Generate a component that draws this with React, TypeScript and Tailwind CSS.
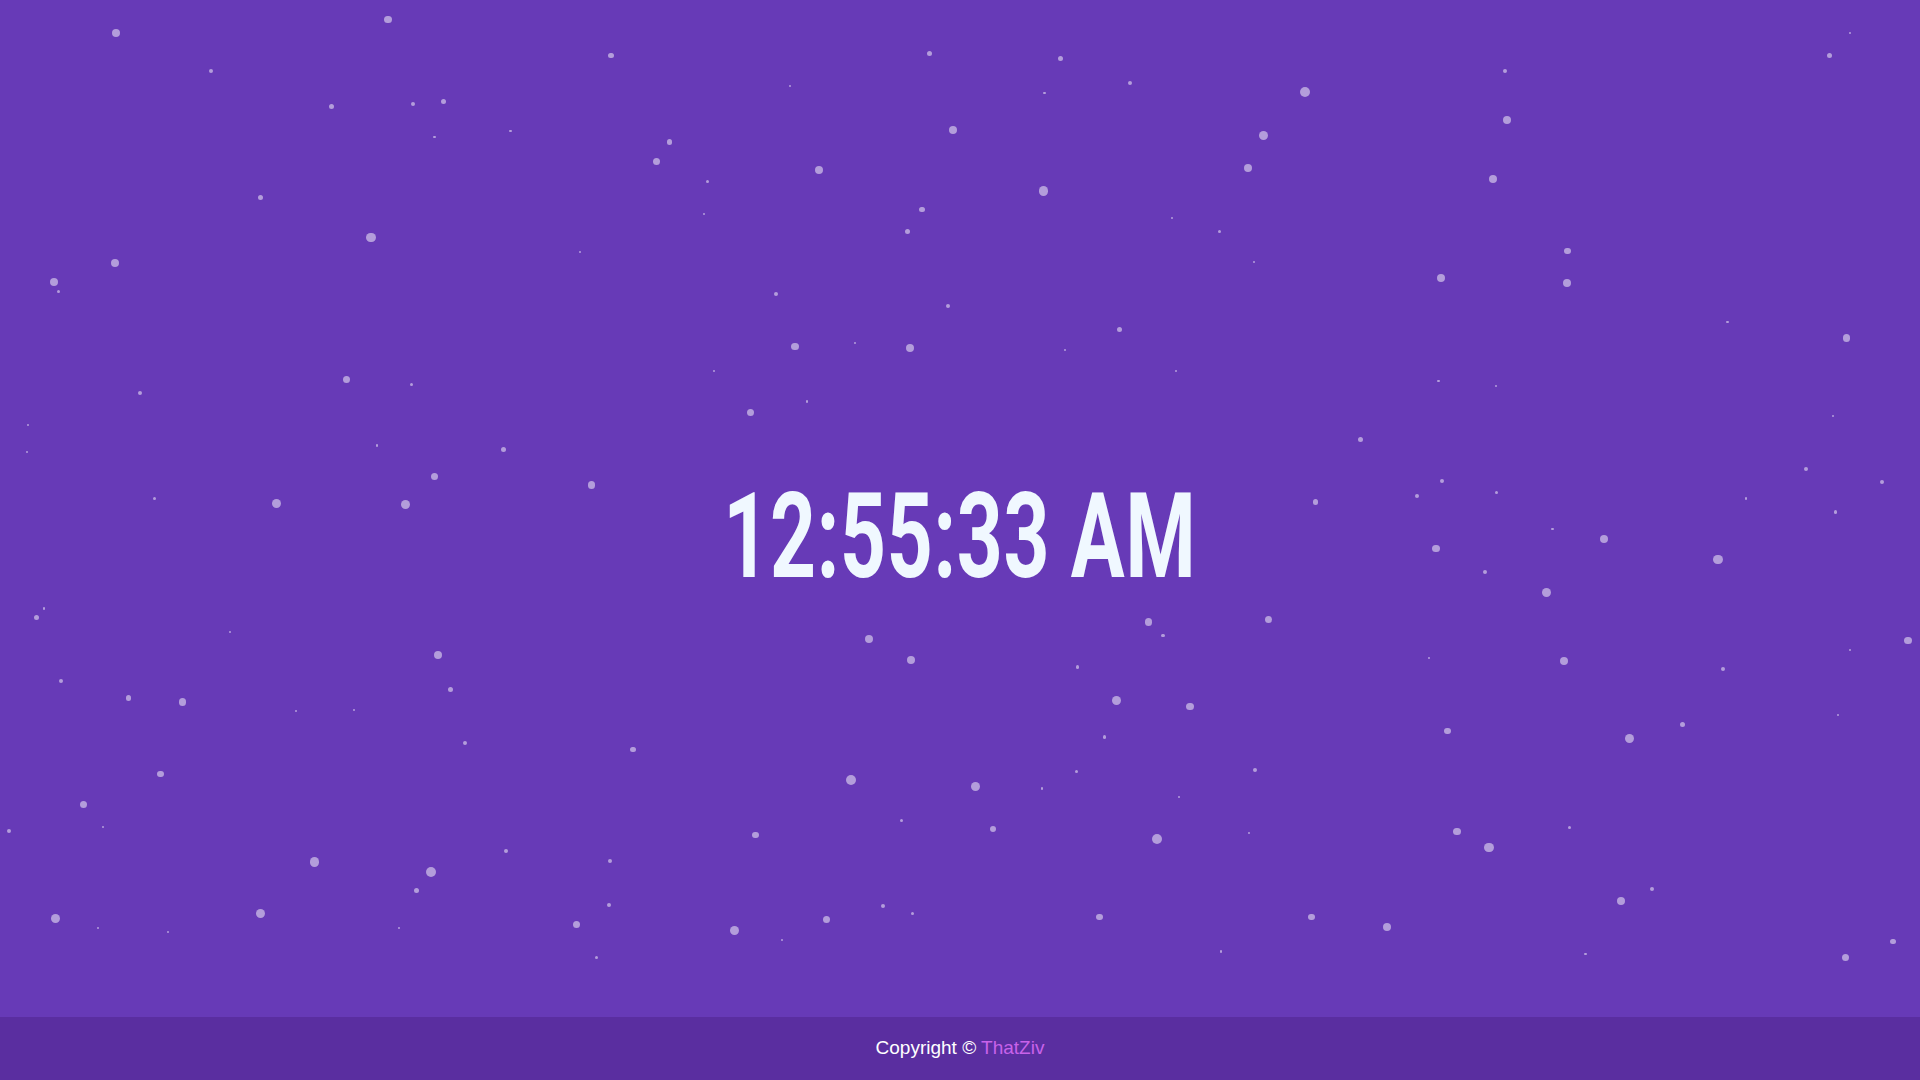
const dots: [number, number, number][] = [
  [95, 27, 3], [317, 16, 3], [172, 58, 1.5], [499, 45, 2], [271, 87, 2], [337, 85, 1.5], [362, 83, 2],
  [355, 112, 1], [417, 107, 1], [547, 116, 2], [536, 132, 2.5], [578, 148, 1], [669, 139, 3], [759, 44, 2],
  [866, 48, 2], [853, 76, 1], [923, 68, 1.5], [778, 106, 3], [1066, 75, 4], [1032, 111, 3.5], [1019, 137, 3],
  [852, 156, 3.5], [753, 171, 2], [741, 189, 2], [996, 189, 1], [1024, 214, 1], [1229, 58, 1.5], [1231, 98, 3],
  [1219, 146, 3], [1494, 45, 2], [1280, 205, 2.5], [1280, 231, 3], [1177, 227, 3], [1411, 263, 1], [1508, 276, 3],
  [1175, 311, 1], [1497, 340, 0.5], [213, 161, 2], [303, 194, 3.5], [94, 215, 3], [44, 230, 3], [48, 238, 1],
  [114, 321, 1.5], [23, 347, 0.5], [22, 369, 0.5], [283, 310, 3], [336, 314, 1], [634, 240, 1.5], [774, 250, 1.5],
  [649, 283, 3], [743, 284, 3], [914, 269, 2], [583, 303, 0.5], [613, 337, 2.5], [659, 328, 1], [308, 364, 1],
  [411, 367, 2], [355, 389, 2.5], [483, 396, 3], [126, 407, 1], [226, 411, 3.5], [331, 412, 3.5], [1111, 359, 2],
  [1074, 410, 2], [1157, 405, 1.5], [1178, 393, 1.5], [1222, 402, 1], [1268, 432, 1], [1310, 440, 3], [1173, 448, 3],
  [1213, 467, 1.5], [1263, 484, 3.5], [1403, 457, 3.5], [1475, 383, 1.5], [1426, 407, 1], [1537, 394, 1.5],
  [1499, 418, 1.5], [30, 504, 2], [36, 497, 1], [188, 516, 1], [50, 556, 1.5], [105, 570, 2], [149, 573, 3],
  [358, 535, 3], [368, 563, 2], [242, 581, 0.5], [289, 580, 0.5], [380, 607, 1.5], [517, 612, 2], [710, 522, 3],
  [744, 539, 3], [938, 508, 3], [950, 519, 1.5], [1036, 506, 2.5], [880, 545, 1.5], [912, 572, 3.5], [972, 577, 3],
  [902, 602, 1.5], [1277, 540, 3], [1407, 546, 1.5], [1167, 537, 0.5], [1558, 523, 3], [1511, 531, 0.5],
  [131, 632, 2.5], [68, 657, 2.5], [7, 679, 1.5], [84, 675, 0.5], [695, 637, 3.5], [797, 642, 3.5], [851, 644, 1],
  [879, 630, 1], [1025, 629, 1.5], [963, 651, 1], [1182, 597, 2.5], [1331, 603, 3.5], [1374, 592, 2], [1501, 584, 0.5],
  [617, 682, 2.5], [736, 670, 1], [811, 677, 2], [945, 685, 4], [1190, 679, 3], [1216, 692, 3.5], [1282, 676, 1],
  [1020, 680, 0.5], [257, 704, 3.5], [352, 712, 4], [413, 695, 1.5], [498, 703, 1.5], [340, 727, 2], [45, 750, 3.5],
  [80, 758, 1], [137, 761, 0.5], [213, 746, 3.5], [497, 739, 1.5], [471, 755, 2.5], [487, 782, 1], [600, 760, 3.5],
  [639, 768, 0.5], [675, 751, 3], [721, 740, 1.5], [745, 746, 1], [898, 749, 2.5], [997, 777, 1], [1071, 749, 2.5],
  [1133, 757, 3], [1324, 736, 3], [1349, 726, 1.5], [1295, 779, 1], [1507, 782, 2.5], [1546, 769, 2], [645, 70, 0.5],
  [1511, 27, 0.5], [575, 175, 0.5], [957, 178, 0.5], [870, 286, 0.5], [960, 303, 0.5], [698, 280, 0.5],
  [474, 206, 0.5], [326, 758, 0.5], [1222, 315, 0.5],
];

const SCALE = 1920 / 1568;

function Snow() {
  return (
    <div className="pointer-events-none absolute inset-0 overflow-hidden">
      {dots.map(([x, y, s], i) => {
        const d = Math.max(2, s * 2.6);
        return (
          <span
            key={i}
            className="absolute rounded-full bg-white/50"
            style={{
              left: x * SCALE - d / 2,
              top: y * SCALE - d / 2,
              width: d,
              height: d,
            }}
          />
        );
      })}
    </div>
  );
}

export default function App() {
  return (
    <div className="flex h-screen w-full flex-col bg-[#673ab7] font-['Liberation_Sans',Arial,sans-serif]">
      <main className="relative flex flex-1 items-center justify-center overflow-hidden pt-14">
        <Snow />
        <h1 className="relative scale-x-[0.68] font-['Roboto',sans-serif] text-[118px] font-bold leading-none tracking-[1px] text-[#f0f8ff]">
          12:55:33 AM
        </h1>
      </main>
      <footer className="flex h-[63px] items-center justify-center bg-[#5a2ea0] text-[19px] text-white">
        <p>
          Copyright © <a href="#" className="text-[#c862ea]">ThatZiv</a>
        </p>
      </footer>
    </div>
  );
}
